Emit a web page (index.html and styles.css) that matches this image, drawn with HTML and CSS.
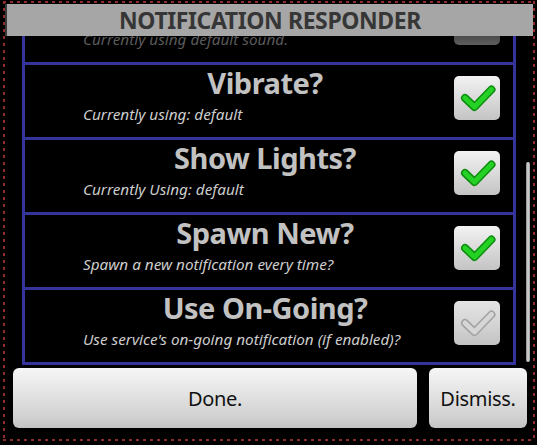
FILE: index.html
```html
<!DOCTYPE html>
<html>
<head>
<meta charset="utf-8">
<link rel="stylesheet" href="styles.css">
</head>
<body>
<div class="frame">
  <div class="header">NOTIFICATION RESPONDER</div>
  <div class="main">
    <div class="viewport">
      <div class="list">
        <div class="row row-faded">
          <div class="text">
            <div class="title title-hidden"></div>
            <div class="sub">Currently using default sound.</div>
          </div>
          <div class="check check-dark"></div>
        </div>
        <div class="row">
          <div class="text">
            <div class="title">Vibrate?</div>
            <div class="sub">Currently using: default</div>
          </div>
          <div class="check">
            <svg viewBox="0 0 46 44" width="46" height="44"><path class="tick-out" d="M11 22 L20.5 31 L37.5 13.5"/><path class="tick-in" d="M11 22 L20.5 31 L37.5 13.5"/></svg>
          </div>
        </div>
        <div class="row">
          <div class="text">
            <div class="title">Show Lights?</div>
            <div class="sub">Currently Using: default</div>
          </div>
          <div class="check">
            <svg viewBox="0 0 46 44" width="46" height="44"><path class="tick-out" d="M11 22 L20.5 31 L37.5 13.5"/><path class="tick-in" d="M11 22 L20.5 31 L37.5 13.5"/></svg>
          </div>
        </div>
        <div class="row">
          <div class="text">
            <div class="title">Spawn New?</div>
            <div class="sub">Spawn a new notification every time?</div>
          </div>
          <div class="check">
            <svg viewBox="0 0 46 44" width="46" height="44"><path class="tick-out" d="M11 22 L20.5 31 L37.5 13.5"/><path class="tick-in" d="M11 22 L20.5 31 L37.5 13.5"/></svg>
          </div>
        </div>
        <div class="row">
          <div class="text">
            <div class="title">Use On-Going?</div>
            <div class="sub">Use service's on-going notification (if enabled)?</div>
          </div>
          <div class="check check-off">
            <svg viewBox="0 0 46 44" width="46" height="44"><path class="tick-out" d="M11 22 L20.5 31 L37.5 13.5"/><path class="tick-in" d="M11 22 L20.5 31 L37.5 13.5"/></svg>
          </div>
        </div>
      </div>
    </div>
    <div class="track"><div class="thumb"></div></div>
  </div>
  <div class="buttons">
    <div class="btn btn-done">Done.</div>
    <div class="btn btn-dismiss">Dismiss.</div>
  </div>
</div>
</body>
</html>
```

FILE: styles.css
```css
html, body {
  margin: 0;
  padding: 0;
  background: #000;
  overflow: hidden;
}
body {
  width: 537px;
  height: 445px;
  font-family: "Noto Sans", "Open Sans", sans-serif;
}
.frame {
  box-sizing: border-box;
  margin: 1px 2px 4px 3px;
  width: 532px;
  height: 440px;
  padding: 3px 2px 2px 4px;
  display: flex;
  flex-direction: column;
  background:
    repeating-linear-gradient(to right, #8e2b2b 0 3px, transparent 3px 7px) left top / 100% 2px no-repeat,
    repeating-linear-gradient(to right, #8e2b2b 0 3px, transparent 3px 7px) left bottom / 100% 2px no-repeat,
    repeating-linear-gradient(to bottom, #8e2b2b 0 3px, transparent 3px 7px) left top / 2px 100% no-repeat,
    repeating-linear-gradient(to bottom, #8e2b2b 0 3px, transparent 3px 7px) right top / 2px 100% no-repeat,
    linear-gradient(#3a3a3a, #3a3a3a) 2px 3px / 2px 32px no-repeat,
    #000;
}
.header {
  height: 32px;
  flex: none;
  background: #a6a6a6;
  color: #363636;
  font-weight: 700;
  font-size: 23px;
  letter-spacing: -0.4px;
  line-height: 32px;
  text-align: center;
}
.main {
  height: 329px;
  flex: none;
  display: flex;
}
.viewport {
  margin-left: 15px;
  width: 494px;
  height: 329px;
  overflow: hidden;
}
.list {
  margin-top: -46px;
}
.row {
  display: grid;
  grid-template-columns: 1fr;
  grid-template-rows: 72px;
  border: 3px solid #34349a;
  border-top: 0;
}
.text {
  grid-area: 1 / 1;
}
.title {
  margin-top: 3px;
  padding-right: 8px;
  height: 30px;
  font-size: 29px;
  letter-spacing: -0.5px;
  line-height: 30px;
  font-weight: 700;
  color: #c2c2c2;
  text-align: center;
  white-space: nowrap;
}
.sub {
  margin-top: 7px;
  padding-left: 58px;
  font-size: 15.3px;
  line-height: 18px;
  font-style: italic;
  color: #cdcdcd;
  white-space: nowrap;
}
.row-faded .sub {
  color: #5a5a5a;
}
.check {
  grid-area: 1 / 1;
  justify-self: end;
  align-self: start;
  margin: 11px 13px 0 0;
  width: 46px;
  height: 44px;
  border-radius: 5px;
  background: linear-gradient(to bottom, #f3f3f3, #d6d6d6 60%, #c4c4c4);
  display: flex;
}
.check svg {
  display: block;
}
.tick-out {
  fill: none;
  stroke: #0d8d0d;
  stroke-width: 8;
  stroke-linecap: round;
  stroke-linejoin: round;
}
.tick-in {
  fill: none;
  stroke: #25d125;
  stroke-width: 5;
  stroke-linecap: round;
  stroke-linejoin: round;
}
.check-off {
  background: linear-gradient(to bottom, #e4e4e4, #d2d2d2 60%, #c2c2c2);
}
.check-off .tick-out {
  stroke: #a2a2a2;
}
.check-off .tick-in {
  stroke: #d6d6d6;
}
.check-dark {
  background: linear-gradient(to bottom, #2a2a2a, #444 70%, #5e5e5e);
}
.track {
  margin-left: 10px;
  width: 4px;
  padding-top: 126px;
}
.thumb {
  height: 200px;
  border-radius: 2px;
  background: linear-gradient(to right, #8a8a8a, #d8d8d8 50%, #9a9a9a);
}
.buttons {
  display: flex;
  gap: 12px;
  padding: 3px 0 0 6px;
}
.btn {
  height: 60px;
  border-radius: 6px;
  background: linear-gradient(to bottom, #f6f6f6, #e2e2e2 45%, #cfcfcf 85%, #c2c2c2);
  color: #111;
  font-size: 20px;
  letter-spacing: -0.3px;
  display: flex;
  align-items: center;
  justify-content: center;
}
.btn-done {
  width: 404px;
}
.btn-dismiss {
  width: 98px;
}
```
